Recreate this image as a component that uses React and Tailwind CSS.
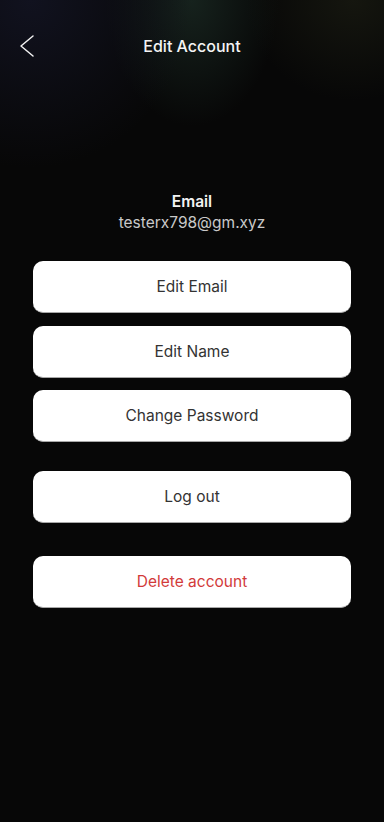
const items = [
  { label: "Edit Email", gap: "" },
  { label: "Edit Name", gap: "mt-[13px]" },
  { label: "Change Password", gap: "mt-3" },
  { label: "Log out", gap: "mt-[29px]" },
  { label: "Delete account", gap: "mt-[33px]", danger: true },
];

export default function App() {
  return (
    <div
      className="relative min-h-[822px] w-full overflow-hidden bg-[#070707] text-white"
      style={{ fontFamily: "Inter, 'Open Sans', sans-serif" }}
    >
      {/* top glow */}
      <div className="pointer-events-none absolute inset-x-0 top-0 h-[240px] bg-[radial-gradient(ellipse_60%_100%_at_8%_0%,#11121f_0%,transparent_70%),radial-gradient(ellipse_30%_70%_at_50%_0%,#16221d_0%,transparent_75%),radial-gradient(ellipse_40%_60%_at_92%_0%,#15160f_0%,transparent_70%)]" />

      <div className="relative">
        {/* Header */}
        <div className="flex h-[92px] items-center px-4">
          <div className="relative flex h-10 w-full items-center justify-center">
            <button className="absolute left-0 top-1/2 -translate-y-1/2 text-white">
              <svg width="24" height="26" viewBox="0 0 24 26" fill="none">
                <path d="M17 3 L5 13 L17 23" stroke="#f2f2f2" strokeWidth="1.5" strokeLinecap="round" strokeLinejoin="round" />
              </svg>
            </button>
            <h1 className="text-[16px] font-medium text-[#f4f4f4]">Edit Account</h1>
          </div>
        </div>

        {/* Email */}
        <div className="mt-[100px] flex flex-col items-center">
          <p className="text-[15.5px] font-semibold leading-5 text-[#f2f2f2]">Email</p>
          <p className="mt-[1px] text-[15.5px] leading-5 text-[#c9c9c9]">testerx798@gm.xyz</p>
        </div>

        {/* Actions */}
        <div className="mt-[28px] flex flex-col px-[33px]">
          {items.map((it) => (
            <button
              key={it.label}
              className={`${it.gap} flex h-[52px] w-full items-center justify-center rounded-[10px] border-b border-[#a8a8a8] bg-white text-[15.5px] ${
                it.danger ? "text-[#d23a3a]" : "text-[#333333]"
              }`}
            >
              {it.label}
            </button>
          ))}
        </div>
      </div>
    </div>
  );
}
